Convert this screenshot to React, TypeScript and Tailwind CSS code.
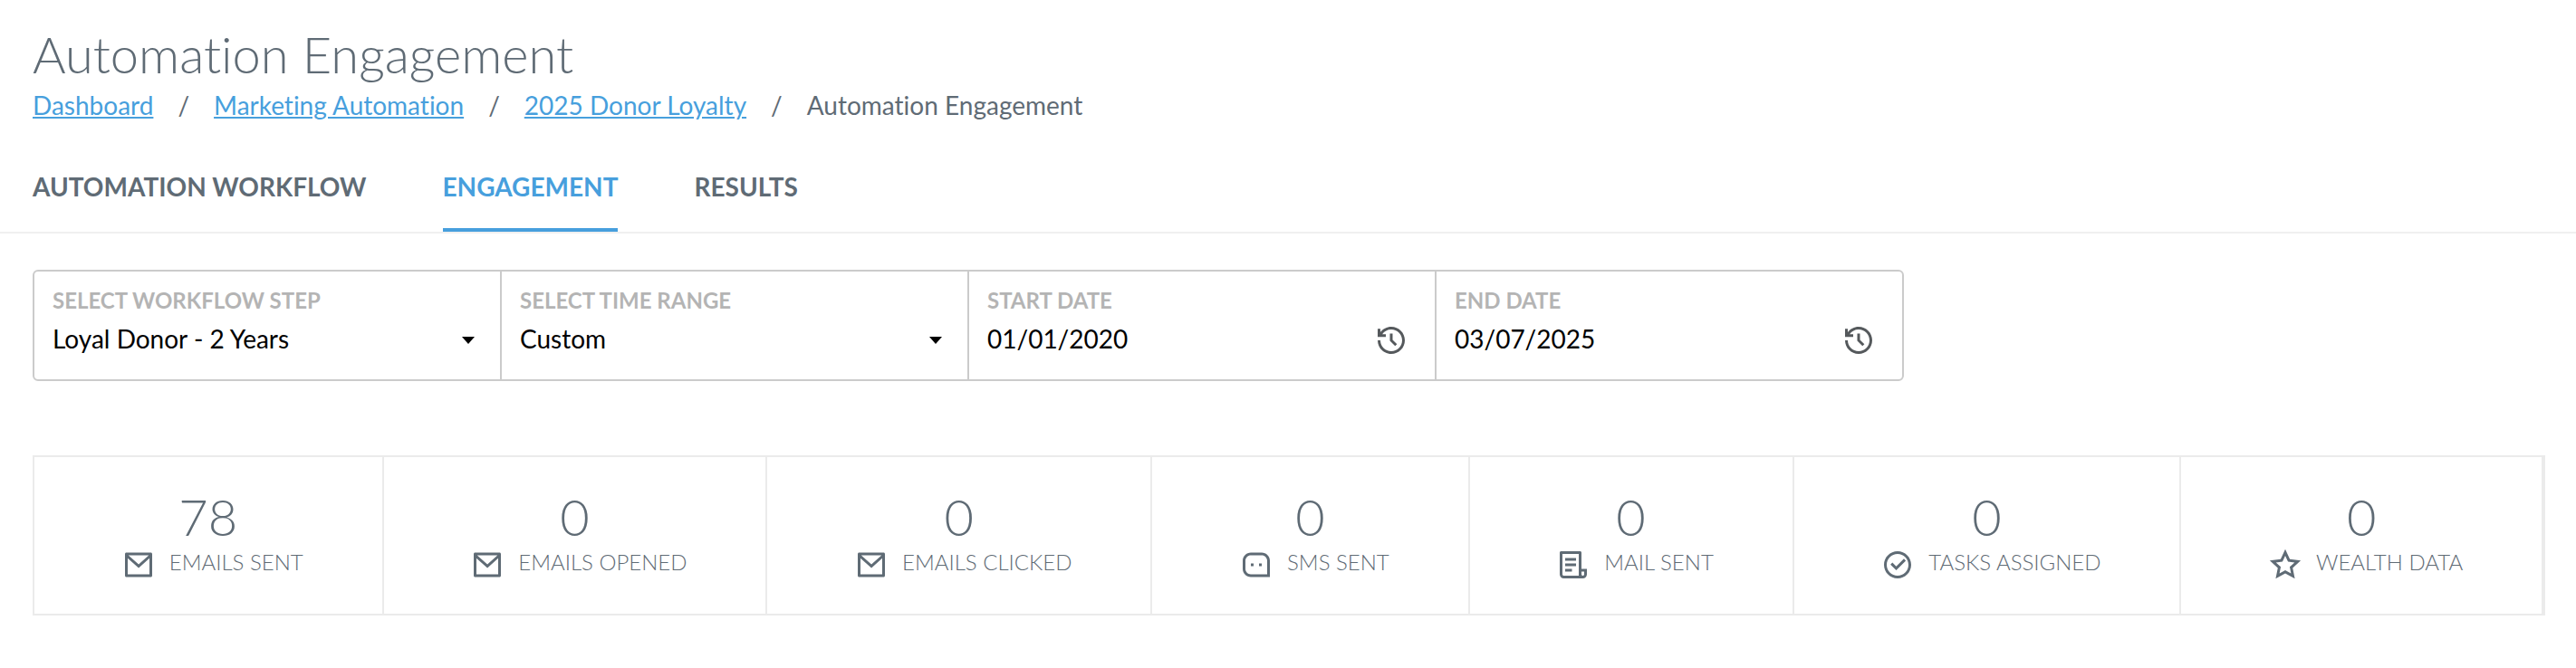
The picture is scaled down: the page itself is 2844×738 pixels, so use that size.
import type { ComponentType } from "react";
import {
  RiCheckboxCircleLine,
  RiFileList3Line,
  RiHistoryLine,
  RiMailLine,
  RiMessage3Line,
  RiStarLine,
} from "react-icons/ri";

const crumbs = ["Dashboard", "Marketing Automation", "2025 Donor Loyalty"];

const tabs = [
  { label: "Automation Workflow", active: false },
  { label: "Engagement", active: true },
  { label: "Results", active: false },
];

type Stat = {
  value: number;
  label: string;
  Icon: ComponentType<{ className?: string }>;
};

const stats: Stat[] = [
  { value: 78, label: "Emails Sent", Icon: RiMailLine },
  { value: 0, label: "Emails Opened", Icon: RiMailLine },
  { value: 0, label: "Emails Clicked", Icon: RiMailLine },
  { value: 0, label: "SMS Sent", Icon: RiMessage3Line },
  { value: 0, label: "Mail Sent", Icon: RiFileList3Line },
  { value: 0, label: "Tasks Assigned", Icon: RiCheckboxCircleLine },
  { value: 0, label: "Wealth Data", Icon: RiStarLine },
];

const fieldClass = "min-w-0 flex-1 px-5 pt-4 pb-[25px]";
const labelClass = "block text-2xl leading-8 font-bold text-[#b4b4b4] uppercase";
const valueClass =
  "h-10 w-full min-w-0 appearance-none bg-transparent text-[28px] leading-10 text-black outline-none";

function SelectField({ id, label, value }: { id: string; label: string; value: string }) {
  return (
    <div className={fieldClass}>
      <label htmlFor={id} className={labelClass}>
        {label}
      </label>
      <div className="mt-1.5 grid items-center">
        <select id={id} defaultValue={value} className={`col-start-1 row-start-1 ${valueClass}`}>
          <option>{value}</option>
        </select>
        <svg
          viewBox="0 0 14 8"
          aria-hidden="true"
          className="pointer-events-none col-start-1 row-start-1 mt-1 mr-2 h-2 w-3.5 justify-self-end fill-black"
        >
          <path d="M0 0h14L7 8z" />
        </svg>
      </div>
    </div>
  );
}

function DateField({ id, label, value }: { id: string; label: string; value: string }) {
  return (
    <div className={fieldClass}>
      <label htmlFor={id} className={labelClass}>
        {label}
      </label>
      <div className="mt-1.5 flex items-end pr-2.5">
        <input id={id} type="text" defaultValue={value} className={valueClass} />
        <button type="button" aria-label={`Pick ${label}`} className="shrink-0 text-[#55595c]">
          <RiHistoryLine className="size-9" />
        </button>
      </div>
    </div>
  );
}

export default function App() {
  return (
    <main className="bg-white pb-14 font-['Lato',sans-serif] text-[#5f6b75] [font-variant-ligatures:no-common-ligatures]">
      <header className="px-9 pt-[26px]">
        <h1 className="text-[56px] leading-[68px] font-light">Automation Engagement</h1>
        <nav aria-label="Breadcrumb" className="mt-0.5">
          <ol className="flex text-[28px] leading-10">
            {crumbs.map((crumb) => (
              <li key={crumb} className="flex">
                <a href="#" className="text-[#479fdd] underline">
                  {crumb}
                </a>
                <span className="px-[27px]">/</span>
              </li>
            ))}
            <li aria-current="page">Automation Engagement</li>
          </ol>
        </nav>
      </header>

      <nav aria-label="Sections" className="mt-[38px] flex gap-[84px] border-b-2 border-[#f0f0f0] px-9">
        {tabs.map(({ label, active }) => (
          <a
            key={label}
            href="#"
            className={
              active
                ? "border-b-4 border-[#479fdd] pt-3 pb-[26px] text-[28px] leading-10 font-bold text-[#479fdd] uppercase"
                : "border-b-4 border-transparent pt-3 pb-[26px] text-[28px] leading-10 font-bold uppercase"
            }
          >
            {label}
          </a>
        ))}
      </nav>

      <div className="pt-10 pr-[34px] pl-9">
        <form className="flex max-w-[2066px] divide-x-2 divide-[#cbcbcb] rounded-md border-2 border-[#cbcbcb]">
          <SelectField id="step" label="Select Workflow Step" value="Loyal Donor - 2 Years" />
          <SelectField id="range" label="Select Time Range" value="Custom" />
          <DateField id="start" label="Start Date" value="01/01/2020" />
          <DateField id="end" label="End Date" value="03/07/2025" />
        </form>

        <section className="mt-[82px] flex border-2 border-[#ebebeb]">
          {stats.map(({ value, label, Icon }) => (
            <div key={label} className="flex-auto border-r-2 border-[#ebebeb] pt-[34px] pb-9 text-center">
              <div className="text-[56px] leading-[64px] font-light">{value}</div>
              <div className="flex items-start justify-center gap-4 pl-2.5">
                <Icon className="mt-[3px] size-9 shrink-0" />
                <span className="text-2xl leading-9 font-light uppercase">{label}</span>
              </div>
            </div>
          ))}
        </section>
      </div>
    </main>
  );
}
